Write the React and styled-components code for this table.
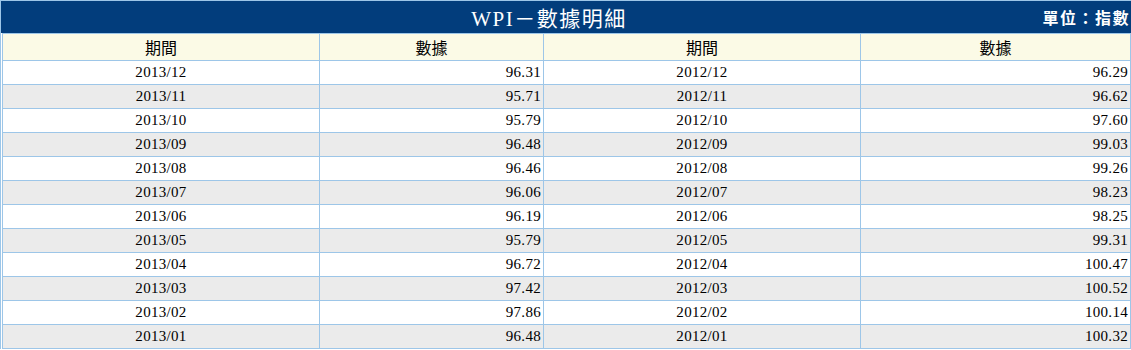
import React from 'react'
import styled, { createGlobalStyle } from 'styled-components'

const GlobalStyle = createGlobalStyle`
  body {
    margin: 0;
    background: #fff;
    font-family: 'Liberation Serif', 'Noto Sans CJK TC', serif;
  }
`

const Frame = styled.div`
  border-left: 1px solid #9dc6e8;
  border-top: 1px solid #9dc6e8;
  width: 1130px;
`

const TitleBar = styled.div`
  align-items: center;
  background: #023d7c;
  color: #fff;
  display: grid;
  grid-template-columns: 1fr auto 1fr;
  height: 32px;
`

const Title = styled.h1`
  font-family: 'Liberation Serif', 'Noto Sans CJK TC', serif;
  font-size: 21px;
  font-weight: normal;
  grid-column: 2;
  letter-spacing: 1.5px;
  margin: 0 34px 0 0;
`

const Unit = styled.span`
  font-family: 'Noto Sans CJK TC', sans-serif;
  font-size: 16px;
  font-weight: bold;
  justify-self: end;
  letter-spacing: 1.5px;
  padding-right: 1px;
`

const TableWrap = styled.div`
  padding-left: 1px;
`

const DataTable = styled.table`
  border-collapse: collapse;
  table-layout: fixed;
  width: 1128px;
`

const HeadCell = styled.th`
  background: #fbfae6;
  border: 1px solid #9dc6e8;
  color: #000;
  font-family: 'Noto Sans CJK TC', sans-serif;
  font-size: 16px;
  font-weight: normal;
  height: 26px;
  padding: 0;
  text-align: center;
`

const Row = styled.tr`
  background: ${p => (p.$striped ? '#ebebeb' : '#fff')};
`

const Cell = styled.td`
  border: 1px solid #9dc6e8;
  color: #000;
  font-family: 'Liberation Serif', 'Noto Sans CJK TC', serif;
  font-size: 15px;
  height: 23px;
  letter-spacing: 0.3px;
  padding: 0 2px;
  text-align: ${p => (p.$num ? 'right' : 'center')};
`

const rows = [
  ['2013/12', '96.31', '2012/12', '96.29'],
  ['2013/11', '95.71', '2012/11', '96.62'],
  ['2013/10', '95.79', '2012/10', '97.60'],
  ['2013/09', '96.48', '2012/09', '99.03'],
  ['2013/08', '96.46', '2012/08', '99.26'],
  ['2013/07', '96.06', '2012/07', '98.23'],
  ['2013/06', '96.19', '2012/06', '98.25'],
  ['2013/05', '95.79', '2012/05', '99.31'],
  ['2013/04', '96.72', '2012/04', '100.47'],
  ['2013/03', '97.42', '2012/03', '100.52'],
  ['2013/02', '97.86', '2012/02', '100.14'],
  ['2013/01', '96.48', '2012/01', '100.32'],
]

function App() {
  return (
    <Frame>
      <GlobalStyle />
      <TitleBar>
        <Title>WPI－數據明細</Title>
        <Unit>單位：指數</Unit>
      </TitleBar>
      <TableWrap>
        <DataTable>
          <colgroup>
            <col style={{ width: 317 }} />
            <col style={{ width: 224 }} />
            <col style={{ width: 317 }} />
            <col style={{ width: 270 }} />
          </colgroup>
          <thead>
            <tr>
              <HeadCell>期間</HeadCell>
              <HeadCell>數據</HeadCell>
              <HeadCell>期間</HeadCell>
              <HeadCell>數據</HeadCell>
            </tr>
          </thead>
          <tbody>
            {rows.map((r, i) => (
              <Row key={r[0]} $striped={i % 2 === 1}>
                <Cell>{r[0]}</Cell>
                <Cell $num>{r[1]}</Cell>
                <Cell>{r[2]}</Cell>
                <Cell $num>{r[3]}</Cell>
              </Row>
            ))}
          </tbody>
        </DataTable>
      </TableWrap>
    </Frame>
  )
}

export default App
